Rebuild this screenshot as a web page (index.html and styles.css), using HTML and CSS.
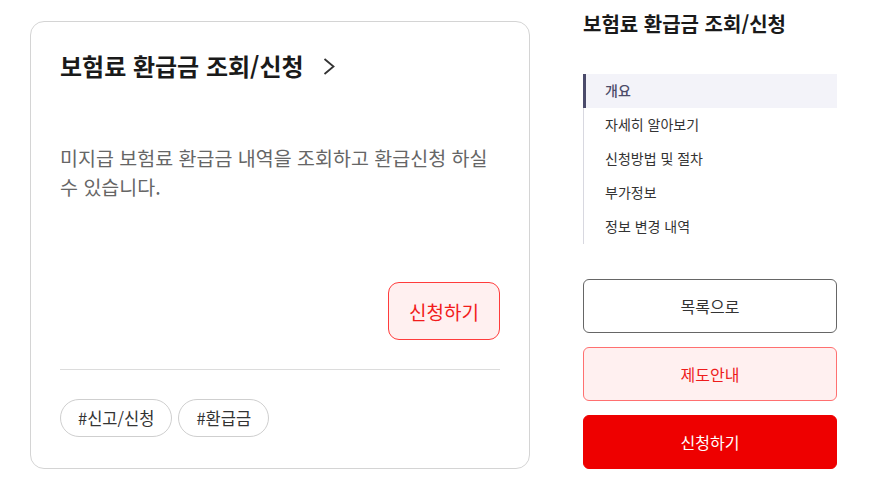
FILE: index.html
```html
<!DOCTYPE html>
<html lang="ko">
<head>
<meta charset="utf-8">
<link rel="stylesheet" href="styles.css">
</head>
<body>
<div class="page">
  <div class="card">
    <h2 class="card-title">보험료 환급금 조회/신청
      <svg class="chev" width="14" height="17" viewBox="0 0 14 17"><path d="M2.5 1 L11.5 8.5 L2.5 16" fill="none" stroke="#333" stroke-width="1.8"/></svg>
    </h2>
    <p class="card-desc">미지급 보험료 환급금 내역을 조회하고 환급신청 하실 수 있습니다.</p>
    <div class="card-action"><button class="btn-apply">신청하기</button></div>
    <hr class="divider">
    <div class="tags">
      <span class="tag">#신고/신청</span>
      <span class="tag">#환급금</span>
    </div>
  </div>
  <aside class="side">
    <h3 class="side-title">보험료 환급금 조회/신청</h3>
    <ul class="nav">
      <li class="nav-item active">개요</li>
      <li class="nav-item">자세히 알아보기</li>
      <li class="nav-item">신청방법 및 절차</li>
      <li class="nav-item">부가정보</li>
      <li class="nav-item">정보 변경 내역</li>
    </ul>
    <div class="side-btns">
      <button class="sbtn sbtn-list">목록으로</button>
      <button class="sbtn sbtn-guide">제도안내</button>
      <button class="sbtn sbtn-apply">신청하기</button>
    </div>
  </aside>
</div>
</body>
</html>
```
FILE: styles.css
```css
* { box-sizing: border-box; }
html, body { margin: 0; padding: 0; background: #fff; }
body {
  font-family: "Noto Sans CJK KR", "Noto Sans", sans-serif;
  color: #222;
}
.page {
  display: flex;
  align-items: flex-start;
  gap: 53px;
  padding: 10px 0 0 30px;
}
.card {
  width: 500px;
  height: 448px;
  margin-top: 11px;
  border: 1px solid #d4d4d4;
  border-radius: 14px;
  padding: 28px 29px 0 29px;
  display: flex;
  flex-direction: column;
}
.card-title {
  margin: 0;
  font-size: 24px;
  font-weight: 700;
  line-height: 32px;
  color: #1a1a1a;
  display: flex;
  align-items: center;
}
.chev { margin-left: 18px; }
.card-desc {
  margin: 61px 0 0 0;
  font-size: 19.5px;
  line-height: 29px;
  color: #666;
}
.card-action {
  display: flex;
  justify-content: flex-end;
  margin-top: 81px;
}
.btn-apply {
  width: 112px;
  height: 58px;
  border: 1px solid #ff3c3c;
  border-radius: 11px;
  background: #fff0f0;
  color: #f21c1c;
  font-family: inherit;
  font-size: 19px;
  padding: 0;
}
.divider {
  margin: 29px 0 0 0;
  border: 0;
  border-top: 1px solid #dcdcdc;
}
.tags {
  display: flex;
  gap: 6px;
  margin-top: 29px;
}
.tag {
  height: 38px;
  padding: 0 17px;
  border: 1px solid #cfcfcf;
  border-radius: 19px;
  display: inline-flex;
  align-items: center;
  font-size: 16.5px;
  color: #333;
}
.side { width: 254px; }
.side-title {
  margin: 0;
  font-size: 20px;
  font-weight: 700;
  line-height: 28px;
  color: #1a1a1a;
}
.nav {
  list-style: none;
  margin: 36px 0 0 0;
  padding: 0;
  border-left: 1px solid #d8d8e0;
}
.nav-item {
  height: 34px;
  line-height: 33px;
  padding-left: 21px;
  font-size: 14px;
  color: #333;
}
.nav-item.active {
  background: #f3f3f9;
  color: #4b4b68;
  font-weight: 500;
  box-shadow: inset 3px 0 0 #4b4b6b;
  margin-left: -1px;
  padding-left: 22px;
}
.side-btns {
  display: flex;
  flex-direction: column;
  gap: 14px;
  margin-top: 35px;
}
.sbtn {
  height: 54px;
  border-radius: 6px;
  font-family: inherit;
  font-size: 16px;
  padding: 0;
}
.sbtn-list { background: #fff; border: 1px solid #666; color: #333; }
.sbtn-guide { background: #fff0f0; border: 1px solid #ff7070; color: #ee1c1c; }
.sbtn-apply { background: #ee0000; border: 1px solid #ee0000; color: #fff; }
```
